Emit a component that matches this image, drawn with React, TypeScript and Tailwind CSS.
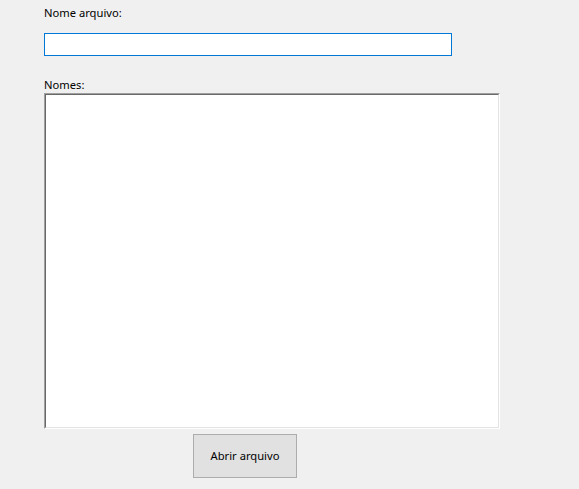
export default function App() {
  return (
    <div
      className="w-[579px] h-[489px] bg-[#f0f0f0] text-[11.2px] text-black relative overflow-hidden"
      style={{ fontFamily: '"Noto Sans", "Open Sans", sans-serif' }}
    >
      <div className="pl-[44px] pt-[5px] flex flex-col items-start">
        <label className="leading-[16px] h-[16px]">Nome arquivo:</label>
        <input
          type="text"
          className="mt-[12px] w-[408px] h-[23px] bg-white border border-[#0078d7] outline-none px-1"
        />
        <label className="mt-[21px] leading-[16px] h-[16px]">Nomes:</label>
        <div className="w-[456px] h-[336px] border border-t-[#a0a0a0] border-l-[#a0a0a0] border-b-white border-r-white">
          <div className="w-full h-full border border-t-[#696969] border-l-[#696969] border-b-[#e3e3e3] border-r-[#e3e3e3] bg-white">
            <textarea className="w-full h-full resize-none outline-none bg-white" />
          </div>
        </div>
        <button className="ml-[149px] mt-[5px] w-[104px] h-[44px] bg-[#e1e1e1] border border-[#adadad] text-[11.2px] leading-none">
          Abrir arquivo
        </button>
      </div>
    </div>
  );
}
